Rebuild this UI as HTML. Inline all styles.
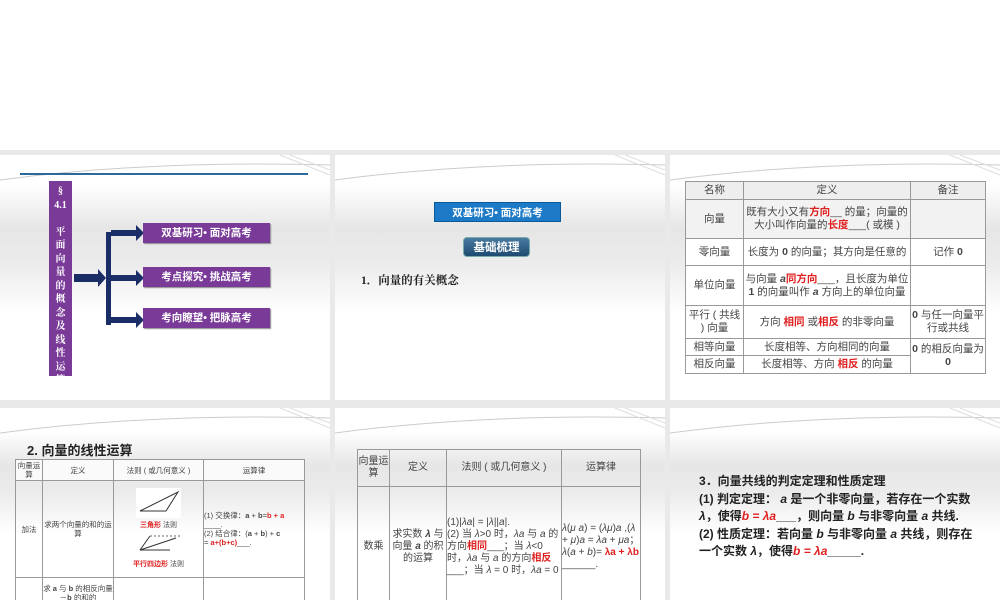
<!DOCTYPE html>
<html><head><meta charset="utf-8"><style>
*{margin:0;padding:0;box-sizing:border-box}
body{width:1000px;height:600px;background:#fff;position:relative;overflow:hidden;font-family:"Liberation Sans","Noto Sans CJK SC",sans-serif;color:#222}
.bg{position:absolute;left:0;top:150px;width:1000px;height:450px;background:#e9e9e9}
.s{position:absolute;overflow:hidden;background:linear-gradient(#fff 0%,#fff 12%,#e6e6e6 30%,#ececec 45%,#fff 65%,#fff 100%)}
.sw{position:absolute;left:0;top:0;width:100%;height:40px}
.a{position:absolute}
table{border-collapse:collapse;position:absolute;font-family:"Liberation Sans","Noto Sans CJK SC",sans-serif;table-layout:fixed}
td{border:1px solid #999;text-align:center;vertical-align:middle;color:#444;line-height:1.2;overflow:hidden}
.r{color:#e02020;font-weight:bold}
.pb{position:absolute;background:#7a3a98;color:#fff;font-size:10.5px;font-weight:bold;text-align:center;line-height:20px;box-shadow:1px 1px 1px #888}
</style></head><body>
<div class="bg"></div>

<!-- slide 1 -->
<div class="s" style="left:0;top:155px;width:330px;height:245px">
<svg class="sw" viewBox="0 0 330 40"><path d="M0 25 Q150 5 330 10" stroke="#ccc" fill="none"/><path d="M280 0 L330 20 M290 0 L330 15" stroke="#ddd"/></svg>
<div class="a" style="left:20px;top:18px;width:288px;height:2px;background:#2c6a9c"></div>
<div class="a" style="left:49px;top:26px;width:23px;height:195px;background:#7a3a98;color:#fff;font-family:'Liberation Serif','Noto Serif CJK SC',serif;font-size:10px;font-weight:bold;text-align:center;line-height:13.5px;padding-top:4px;overflow:hidden">§<br>4.1<br><br>平<br>面<br>向<br>量<br>的<br>概<br>念<br>及<br>线<br>性<br>运<br>算</div>
<svg class="a" style="left:70px;top:60px" width="80" height="130" viewBox="0 0 80 130">
<g fill="#1b2d66">
<rect x="4" y="59" width="24" height="8"/><polygon points="28,54 36,63 28,72"/>
<rect x="36" y="17" width="5" height="93"/>
<rect x="41" y="15" width="26" height="6"/><polygon points="66,10 74,18 66,26"/>
<rect x="41" y="60" width="26" height="6"/><polygon points="66,55 74,63 66,71"/>
<rect x="41" y="102" width="26" height="6"/><polygon points="66,97 74,105 66,113"/>
</g></svg>
<div class="pb" style="left:143px;top:68px;width:127px;height:20px">双基研习• 面对高考</div>
<div class="pb" style="left:143px;top:112px;width:127px;height:20px">考点探究• 挑战高考</div>
<div class="pb" style="left:143px;top:153px;width:127px;height:20px">考向瞭望• 把脉高考</div>
</div>

<!-- slide 2 -->
<div class="s" style="left:335px;top:155px;width:330px;height:245px">
<svg class="sw" viewBox="0 0 330 40"><path d="M0 25 Q150 5 330 10" stroke="#ccc" fill="none"/><path d="M280 0 L330 20 M290 0 L330 15" stroke="#ddd"/></svg>
<div class="a" style="left:99px;top:47px;width:127px;height:20px;background:#1c7ac6;color:#fff;font-size:10.5px;font-weight:bold;text-align:center;line-height:20px;border:1px solid #0d5a9a">双基研习• 面对高考</div>
<div class="a" style="left:128px;top:82px;width:67px;height:20px;background:linear-gradient(#4a7aa0,#1d4a70);color:#fff;font-size:11.5px;font-weight:bold;text-align:center;line-height:20px;border-radius:4px;border:1px solid #7aa"> 基础梳理</div>
<div class="a" style="left:26px;top:117px;font-size:11.5px;font-weight:bold;font-family:'Liberation Serif','Noto Serif CJK SC',serif">1．向量的有关概念</div>
</div>

<!-- slide 3 -->
<div class="s" style="left:670px;top:155px;width:330px;height:245px">
<svg class="sw" viewBox="0 0 330 40"><path d="M0 25 Q150 5 330 10" stroke="#ccc" fill="none"/><path d="M280 0 L330 20 M290 0 L330 15" stroke="#ddd"/></svg>
<table style="left:15px;top:26px;width:300px;font-size:10.5px;background:#fff">
<tr style="height:18px;background:#eee"><td style="width:58px">名称</td><td style="width:167px">定义</td><td style="width:75px">备注</td></tr>
<tr style="height:39px;background:#f2f2f2"><td>向量</td><td>既有大小又有<span class="r">方向</span>__ 的量；向量的大小叫作向量的<span class="r">长度</span>___( 或模 )</td><td></td></tr>
<tr style="height:27px"><td>零向量</td><td>长度为 <b>0</b> 的向量；其方向是任意的</td><td>记作 <b>0</b></td></tr>
<tr style="height:40px;background:#fff"><td>单位向量</td><td>与向量 <b><i>a</i></b><span class="r">同方向</span>___，且长度为单位 <b>1</b> 的向量叫作 <b><i>a</i></b> 方向上的单位向量</td><td></td></tr>
<tr style="height:33px"><td>平行 ( 共线 ) 向量</td><td>方向 <span class="r">相同</span> 或<span class="r">相反</span> 的非零向量</td><td><b>0</b> 与任一向量平行或共线</td></tr>
<tr style="height:17px"><td>相等向量</td><td>长度相等、方向相同的向量</td><td rowspan="2"><b>0</b> 的相反向量为 <b>0</b></td></tr>
<tr style="height:18px"><td>相反向量</td><td>长度相等、方向 <span class="r">相反</span> 的向量</td></tr>
</table>
</div>

<!-- slide 4 -->
<div class="s" style="left:0;top:408px;width:330px;height:192px">
<svg class="sw" viewBox="0 0 330 40"><path d="M0 25 Q150 5 330 10" stroke="#ccc" fill="none"/><path d="M280 0 L330 20 M290 0 L330 15" stroke="#ddd"/></svg>
<div class="a" style="left:27px;top:32px;font-size:13px;font-weight:bold">2. 向量的线性运算</div>
<table style="left:15px;top:51px;width:289px;font-size:7.5px">
<tr style="height:21px;background:#fafafa"><td style="width:27px">向量运算</td><td style="width:71px">定义</td><td style="width:90px">法则 ( 或几何意义 )</td><td style="width:101px">运算律</td></tr>
<tr style="height:97px"><td>加法</td><td>求两个向量的和的运算</td><td style="font-size:7px"><svg width="45" height="30"><rect width="45" height="30" fill="#fff"/><path d="M4 23 L30 23 L42 4 Z" stroke="#333" fill="none"/></svg><br><span class="r">三角形</span> 法则<br><svg width="45" height="28"><path d="M4 20 L40 8 M4 20 L14 6 M4 20 L34 20" stroke="#333" fill="none"/><path d="M14 6 L44 6" stroke="#666" stroke-dasharray="2" fill="none"/></svg><br><span class="r">平行四边形</span> 法则</td><td style="text-align:left;font-size:7.5px">(1) 交换律：<b>a</b> + <b>b</b>=<span class="r">b + a</span><br>____.<br>(2) 结合律：(<b>a</b> + <b>b</b>) + <b>c</b><br>= <span class="r">a+(b+c)</span>___.</td></tr>
<tr style="height:30px"><td></td><td>求 <b>a</b> 与 <b>b</b> 的相反向量－<b>b</b> 的和的</td><td></td><td></td></tr>
</table>
</div>

<!-- slide 5 -->
<div class="s" style="left:335px;top:408px;width:330px;height:192px">
<svg class="sw" viewBox="0 0 330 40"><path d="M0 25 Q150 5 330 10" stroke="#ccc" fill="none"/><path d="M280 0 L330 20 M290 0 L330 15" stroke="#ddd"/></svg>
<table style="left:22px;top:41px;width:283px;font-size:10px">
<tr style="height:37px"><td style="width:32px">向量运算</td><td style="width:57px">定义</td><td style="width:115px">法则 ( 或几何意义 )</td><td style="width:79px">运算律</td></tr>
<tr style="height:120px"><td>数乘</td><td>求实数 <b><i>λ</i></b> 与向量 <b><i>a</i></b> 的积的运算</td><td style="text-align:left">(1)|<i>λa</i>| = |<i>λ</i>||<i>a</i>|.<br>(2) 当 <i>λ</i>&gt;0 时，<i>λa</i> 与 <i>a</i> 的方向<span class="r">相同</span>___；当 <i>λ</i>&lt;0 时，<i>λa</i> 与 <i>a</i> 的方向<span class="r">相反</span>___；当 <i>λ</i> = 0 时，<i>λa</i> = 0</td><td style="text-align:left"><i>λ</i>(<i>μ a</i>) = (<i>λμ</i>)<i>a</i> ,(<i>λ</i> + <i>μ</i>)<i>a</i> = <i>λa</i> + <i>μa</i>；<i>λ</i>(<i>a</i> + <i>b</i>)= <span class="r">λa + λb</span><br>______.</td></tr>
</table>
</div>

<!-- slide 6 -->
<div class="s" style="left:670px;top:408px;width:330px;height:192px">
<svg class="sw" viewBox="0 0 330 40"><path d="M0 25 Q150 5 330 10" stroke="#ccc" fill="none"/><path d="M280 0 L330 20 M290 0 L330 15" stroke="#ddd"/></svg>
<div class="a" style="left:29px;top:65px;width:280px;font-size:12px;line-height:17.5px;font-weight:bold;color:#222">3．向量共线的判定定理和性质定理<br>(1) 判定定理： <i>a</i> 是一个非零向量，若存在一个实数 <i>λ</i>，使得<span class="r"><i>b = λa</i></span>___，则向量 <i>b</i> 与非零向量 <i>a</i> 共线.<br>(2) 性质定理：若向量 <i>b</i> 与非零向量 <i>a</i> 共线，则存在一个实数 <i>λ</i>，使得<span class="r"><i>b = λa</i></span>_____.</div>
</div>
</body></html>
